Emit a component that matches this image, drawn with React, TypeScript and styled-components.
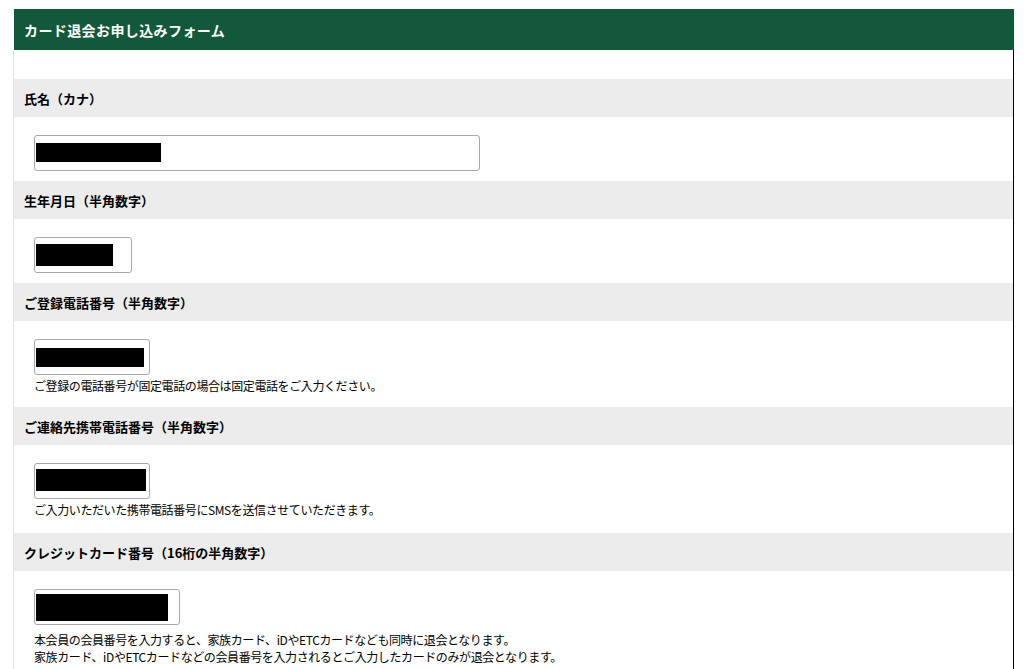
import styled, { createGlobalStyle } from "styled-components";

const GlobalStyle = createGlobalStyle`
  html, body {
    margin: 0;
    padding: 0;
    background: #fff;
  }
  body {
    font-family: "Noto Sans CJK JP", "Noto Sans", sans-serif;
    color: #000;
  }
`;

const Page = styled.div`
  padding: 9px 0 0 14px;
`;

const Header = styled.h1`
  margin: 0;
  width: 1000px;
  height: 41px;
  background: #12583b;
  color: #fff;
  font-size: 14px;
  font-weight: bold;
  letter-spacing: 0.4px;
  display: flex;
  align-items: center;
  padding-left: 10px;
  box-sizing: border-box;
`;

const Body = styled.div`
  margin-left: -1px;
  width: 1001px;
  box-sizing: border-box;
  border-left: 1px solid #e2e2e2;
  border-right: 1px solid #000;
  padding-top: 29px;
`;

const Section = styled.section`
  display: flex;
  flex-direction: column;
`;

const Label = styled.div`
  height: 38px;
  background: #ececec;
  font-size: 13px;
  font-weight: bold;
  display: flex;
  align-items: center;
  padding-left: 10px;
`;

const Content = styled.div<{ $bottom?: number }>`
  padding: 18px 0 ${(p) => p.$bottom ?? 10}px 20px;
`;

const InputBox = styled.div<{ $w: number }>`
  width: ${(p) => p.$w}px;
  height: 36px;
  box-sizing: border-box;
  border: 1px solid #a9a9a9;
  border-radius: 3px;
  background: #fff;
  display: flex;
  align-items: center;
  padding-left: 1px;
`;

const Redact = styled.span<{ $w: number; $h: number; $dy?: number }>`
  display: block;
  width: ${(p) => p.$w}px;
  height: ${(p) => p.$h}px;
  background: #000;
  margin-top: ${(p) => p.$dy ?? 0}px;
`;

const Note = styled.p<{ $top?: number }>`
  margin: ${(p) => p.$top ?? 2}px 0 0;
  font-size: 12px;
  line-height: 17px;
  letter-spacing: -0.4px;
  white-space: nowrap;
`;

type Field = {
  label: string;
  width: number;
  redact: [number, number, number?];
  notes?: string[];
  noteTop?: number;
  bottom?: number;
};

const fields: Field[] = [
  { label: "氏名（カナ）", width: 446, redact: [125, 19, -1] },
  { label: "生年月日（半角数字）", width: 98, redact: [77, 22] },
  {
    label: "ご登録電話番号（半角数字）",
    width: 116,
    redact: [108, 19],
    notes: ["ご登録の電話番号が固定電話の場合は固定電話をご入力ください。"],
    bottom: 13,
  },
  {
    label: "ご連絡先携帯電話番号（半角数字）",
    width: 116,
    redact: [110, 22, -2],
    notes: ["ご入力いただいた携帯電話番号にSMSを送信させていただきます。"],
    bottom: 15,
  },
  {
    label: "クレジットカード番号（16桁の半角数字）",
    width: 146,
    redact: [132, 27],
    notes: [
      "本会員の会員番号を入力すると、家族カード、iDやETCカードなども同時に退会となります。",
      "家族カード、iDやETCカードなどの会員番号を入力されるとご入力したカードのみが退会となります。",
    ],
    noteTop: 6,
  },
];

export default function App() {
  return (
    <Page>
      <GlobalStyle />
      <Header>カード退会お申し込みフォーム</Header>
      <Body>
        {fields.map((f) => (
          <Section key={f.label}>
            <Label>{f.label}</Label>
            <Content $bottom={f.bottom}>
              <InputBox $w={f.width}>
                <Redact $w={f.redact[0]} $h={f.redact[1]} $dy={f.redact[2]} />
              </InputBox>
              {f.notes && (
                <div>
                  {f.notes.map((n, i) => (
                    <Note key={n} $top={i === 0 ? f.noteTop : 0}>
                      {n}
                    </Note>
                  ))}
                </div>
              )}
            </Content>
          </Section>
        ))}
      </Body>
    </Page>
  );
}
